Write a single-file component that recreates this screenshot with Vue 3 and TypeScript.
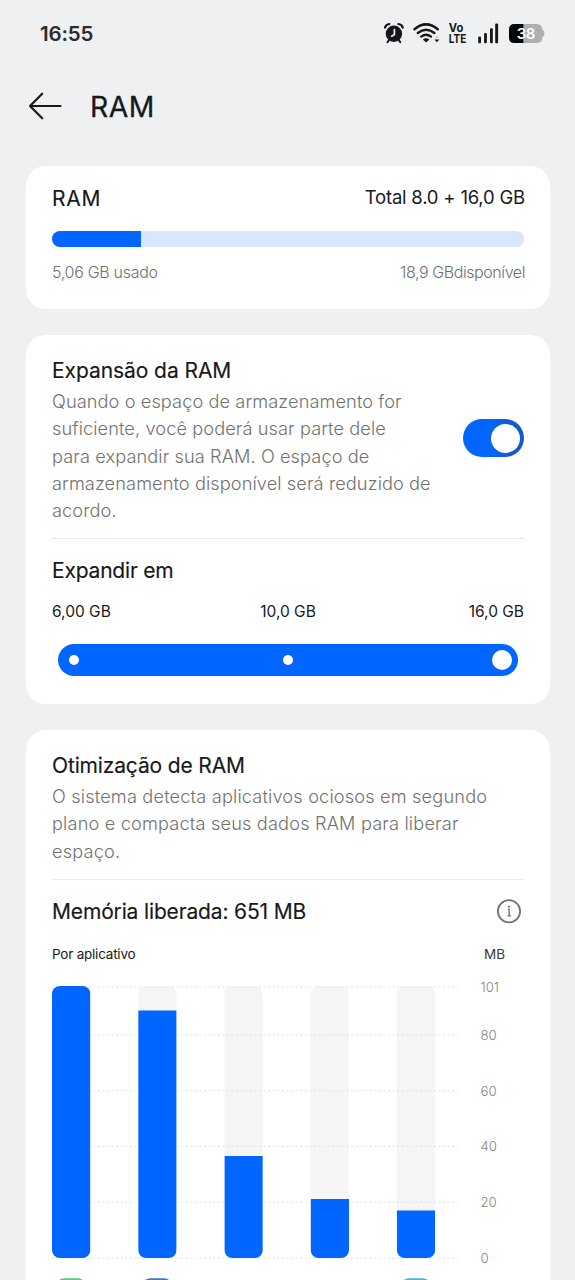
<script setup lang="ts">
interface AppBar { x: number; top: number; icon: string }

const baseY = 272
const bars: AppBar[] = [
  { x: 0, top: 0, icon: '#4fcf7c' },
  { x: 86.2, top: 24.5, icon: '#3f78c4' },
  { x: 172.4, top: 170, icon: '' },
  { x: 258.6, top: 213, icon: '' },
  { x: 344.8, top: 224.5, icon: '#43b9d8' },
]
const ticks = [
  { label: '101', y: 1 },
  { label: '80', y: 49 },
  { label: '60', y: 104.7 },
  { label: '40', y: 160.5 },
  { label: '20', y: 216.2 },
  { label: '0', y: 272 },
]
const expandText = [
  'Quando o espaço de armazenamento for',
  'suficiente, você poderá usar parte dele',
  'para expandir sua RAM. O espaço de',
  'armazenamento disponível será reduzido de',
  'acordo.',
]
const optimizeText = [
  'O sistema detecta aplicativos ociosos em segundo',
  'plano e compacta seus dados RAM para liberar',
  'espaço.',
]
</script>

<template>
  <div class="screen">
    <header class="status">
      <span class="clock">16:55</span>
      <svg class="status-icons" width="165" height="26" viewBox="382 20 165 26">
        <g fill="none" stroke="#15171a" stroke-linecap="round">
          <circle cx="393.9" cy="33.8" r="8.2" fill="#15171a" stroke="none" />
          <path d="M385 27.6Q386 24.3 389.4 24M402.8 27.6Q401.8 24.3 398.4 24" stroke-width="2.2" />
          <path d="M388.8 40.4L387.5 42.3M399 40.4L400.3 42.3" stroke-width="2" />
          <path d="M394.4 29.5V34.5L391.7 36.2" stroke="#eef0f2" stroke-width="1.7" />
          <path d="M414.5 29.2Q426.1 19.6 437.7 29.2" stroke-width="2.5" />
          <path d="M417.8 33Q426.1 26.4 434.4 33" stroke-width="2.4" />
          <path d="M421.2 36.6Q426.1 33 431 36.6" stroke-width="2.3" />
        </g>
        <path d="M422.8 39.5Q426.1 37 429.4 39.5L426.1 42.6Z" fill="#15171a" />
        <path d="M434.4 39.6h5l-2.5 2.6z" fill="#15171a" />
        <path d="M435.6 37.4h2.6l-1.3-1.2z" fill="#8a8c8f" />
        <text x="448.8" y="32" font-size="11.3" font-weight="700" textLength="14.5" lengthAdjust="spacingAndGlyphs">Vo</text>
        <text x="448.8" y="42.8" font-size="11.3" font-weight="700" textLength="17.5" lengthAdjust="spacingAndGlyphs">LTE</text>
        <g fill="#15171a">
          <rect x="478.2" y="36.4" width="2.8" height="6.8" rx="1" />
          <rect x="484.1" y="33" width="2.8" height="10.2" rx="1" />
          <rect x="490" y="28.2" width="2.8" height="15" rx="1" />
          <rect x="495.2" y="23.4" width="2.9" height="19.8" rx="1" />
        </g>
        <rect x="509" y="24" width="33.4" height="19" rx="5.5" fill="#adafb1" />
        <path d="M542 29.5Q544.5 30.5 544.5 33.5T542 37.5Z" fill="#adafb1" />
        <path d="M523.4 24H514.5Q509 24 509 29.5V37.5Q509 43 514.5 43H523.4Z" fill="#050505" />
        <text x="516.8" y="39" font-size="15" font-weight="600" class="level" textLength="18.5">38</text>
      </svg>
    </header>

    <div class="topbar">
      <svg width="34" height="28" viewBox="0 0 34 28" fill="none" stroke="#17191c" stroke-width="2.2" stroke-linecap="round" stroke-linejoin="round">
        <path d="M32.5 14H2M14.2 1.7L2 14L14.2 26.3" />
      </svg>
      <h1>RAM</h1>
    </div>

    <section class="card usage">
      <div class="row">
        <h2 class="ram">RAM</h2>
        <span class="total">Total 8.0 + 16,0 GB</span>
      </div>
      <div class="meter"><div class="used"></div></div>
      <div class="row small">
        <span class="in-use">5,06 GB usado</span>
        <span class="free">18,9 GBdisponível</span>
      </div>
    </section>

    <section class="card expansion">
      <div class="row">
        <div>
          <h2 class="t-exp">Expansão da RAM</h2>
          <p class="p-exp"><span v-for="line in expandText" :key="line">{{ line }}</span></p>
        </div>
        <div class="toggle"><i></i></div>
      </div>
      <hr />
      <h2 class="t-in">Expandir em</h2>
      <div class="sizes"><span>6,00 GB</span><span>10,0 GB</span><span>16,0 GB</span></div>
      <div class="slider"><i></i><i class="mid"></i><i class="knob"></i></div>
    </section>

    <section class="card optimization">
      <h2 class="t-opt">Otimização de RAM</h2>
      <p class="p-opt"><span v-for="line in optimizeText" :key="line">{{ line }}</span></p>
      <hr />
      <div class="row freed">
        <h2 class="t-mem">Memória liberada: 651 MB</h2>
        <svg width="26" height="26" viewBox="0 0 26 26" fill="none" stroke="#737373">
          <circle cx="13" cy="12.2" r="11.1" stroke-width="1.8" />
          <path d="M11.8 10.4H13.2V16.6M11.6 16.7H14.8" stroke-width="1.4" />
          <circle cx="13" cy="7.7" r="1.1" fill="#737373" stroke="none" />
        </svg>
      </div>
      <div class="row captions"><span class="by-app">Por aplicativo</span><span class="unit">MB</span></div>
      <svg class="chart" width="472" height="310" viewBox="0 0 472 310">
        <defs>
          <clipPath v-for="(bar, i) in bars" :id="'bar' + i" :key="i">
            <rect :x="bar.x" y="0" width="38.4" :height="baseY" rx="8" />
          </clipPath>
        </defs>
        <rect v-for="bar in bars" :key="bar.x" :x="bar.x" y="0" width="38.4" :height="baseY" rx="8" fill="#f5f5f5" />
        <line v-for="tick in ticks" :key="tick.y" x1="0" x2="406" :y1="tick.y" :y2="tick.y" stroke="#e0e0e0" stroke-dasharray="2 2.6" />
        <g v-for="(bar, i) in bars" :key="bar.x">
          <rect :x="bar.x" :y="bar.top" width="38.4" :height="baseY - bar.top" fill="#0066ff" :clip-path="`url(#bar${i})`" />
          <rect v-if="bar.icon" :x="bar.x + 4" y="292.2" width="30" height="30" rx="8" :fill="bar.icon" />
        </g>
        <text v-for="tick in ticks" :key="tick.label" x="428.5" :y="tick.y + 4.8" class="tick">{{ tick.label }}</text>
      </svg>
    </section>
  </div>
</template>

<style scoped>
.screen {
  width: 575px;
  height: 1280px;
  overflow: hidden;
  box-sizing: border-box;
  padding: 20px 25px 0 26px;
  background: #eef0f2;
  color: #17191c;
  font-family: Inter, "Liberation Sans", sans-serif;
}
h1, h2, p { margin: 0; font-weight: 400; }
h2 { font-size: 21px; line-height: 28px; white-space: nowrap; -webkit-text-stroke: 0.15px #17191c; }
.status { display: flex; justify-content: space-between; height: 26px; padding: 0 3px 0 14px; }
.clock { font-size: 20.5px; font-weight: 600; line-height: 27px; letter-spacing: -0.2px; color: #2a2c2f; }
.status-icons text { fill: #15171a; }
.status-icons .level { fill: #fff; }
.topbar { display: flex; align-items: center; gap: 28px; height: 40px; margin: 40px 0 40px 2px; }
h1 { padding-top: 1px; font-size: 28.3px; line-height: 40px; letter-spacing: 0.5px; -webkit-text-stroke: 0.3px #17191c; }
.card { box-sizing: border-box; width: 524px; padding: 0 26px; border-radius: 20px; background: #fff; }
.row { display: flex; justify-content: space-between; align-items: center; white-space: nowrap; }
.usage { height: 143px; padding-top: 19px; }
.ram { letter-spacing: 0.8px; }
.total { margin: 0 -1px 3px 0; font-size: 18.5px; line-height: 25px; letter-spacing: -0.2px; }
.meter { height: 16px; margin: 18px 0 15px; border-radius: 8px; overflow: hidden; background: #dae6fd; }
.used { width: 89px; height: 16px; background: #0066ff; }
.small { font-size: 16px; line-height: 20px; font-weight: 300; color: #707070; }
.in-use { letter-spacing: -0.3px; }
.free { margin-right: -1px; letter-spacing: -0.42px; }
.expansion { height: 369px; margin-top: 26px; padding-top: 21.6px; }
p { margin-top: 3.6px; font-size: 18.2px; line-height: 27.3px; font-weight: 300; color: #727272; }
p span { display: block; white-space: nowrap; }
.t-exp { letter-spacing: -0.07px; }
.p-exp { letter-spacing: 0.09px; }
.t-in { letter-spacing: -0.2px; }
.t-opt { letter-spacing: -0.15px; }
.p-opt { letter-spacing: 0.16px; }
.t-mem { letter-spacing: -0.15px; }
.toggle { box-sizing: border-box; display: flex; justify-content: flex-end; width: 61px; height: 38px; margin-top: -5px; padding: 4.5px; border-radius: 19px; background: linear-gradient(90deg, #0066ff 45%, #1459cb 80%); }
.toggle i { width: 29px; height: 29px; border-radius: 50%; background: #fff; }
hr { height: 1px; margin: 13.6px 0 18px; border: 0; background: #e9e9e9; }
.sizes { display: grid; grid-template-columns: 1fr 1fr 1fr; margin-top: 17px; font-size: 15.5px; line-height: 20px; }
.sizes span:nth-child(2) { text-align: center; }
.sizes span:nth-child(3) { text-align: right; }
.slider { box-sizing: border-box; display: flex; align-items: center; justify-content: space-between; height: 32px; margin: 22px 6px 0; padding: 0 6px 0 11px; border-radius: 16px; background: #0066ff; }
.slider i { width: 10px; height: 10px; border-radius: 50%; background: #fff; }
.slider .mid { margin-left: 5px; }
.slider .knob { width: 20px; height: 20px; }
.optimization { height: 580px; margin-top: 26px; padding-top: 21.6px; }
.freed svg { margin: 0 2px 0 0; }
.captions { height: 20px; margin-top: 18px; padding-right: 19px; font-size: 13.5px; }
.by-app { letter-spacing: -0.22px; }
.unit { color: #3a3a3a; }
.chart { display: block; margin-top: 22px; overflow: visible; }
.tick { font-size: 13.2px; font-weight: 300; fill: #858585; }
</style>
